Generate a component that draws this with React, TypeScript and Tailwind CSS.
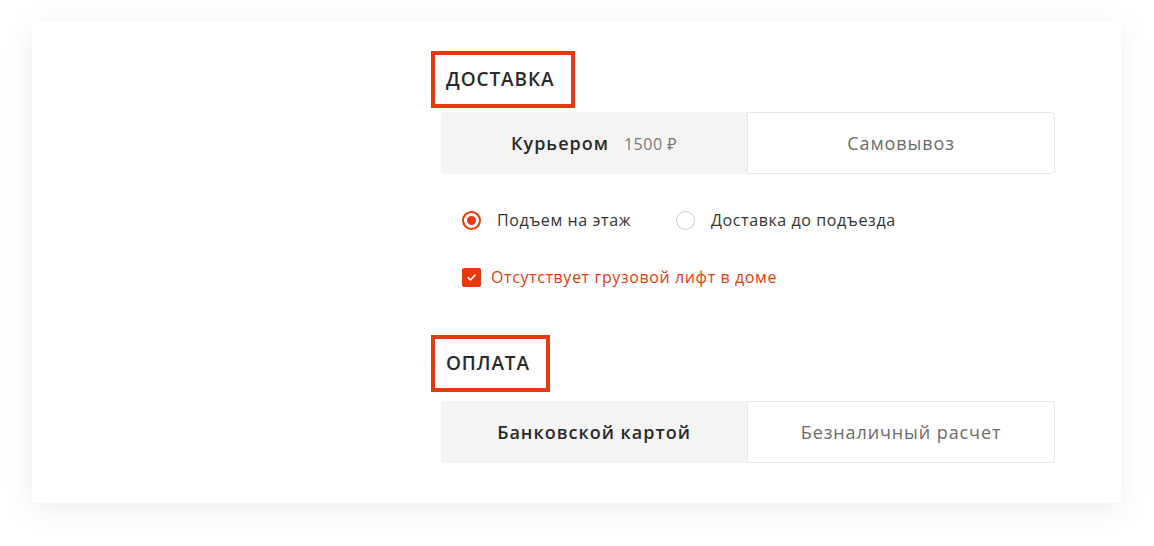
const RED = "#e8390e";

function Tabs({ left, right }: { left: React.ReactNode; right: string }) {
  return (
    <div className="ml-[10px] flex h-[62px] w-[614px]">
      <div className="flex flex-1 items-center justify-center rounded-l-[4px] bg-[#f4f4f4]">
        {left}
      </div>
      <div className="flex flex-1 items-center justify-center rounded-r-[4px] border border-[#e6e6e6] bg-white text-[18px] tracking-[0.9px] text-[#6b6b6b]">
        {right}
      </div>
    </div>
  );
}

function Heading({ children }: { children: string }) {
  return (
    <div className="inline-flex h-[57px] items-center self-start border-4 border-[#e8390e] pl-[11px] pr-[16px] text-[19px] font-semibold tracking-[0.9px] text-[#2a2a2a]">
      {children}
    </div>
  );
}

function Radio({ checked, label }: { checked?: boolean; label: string }) {
  return (
    <label className="flex items-center gap-[16px] text-[16px] leading-[20px] tracking-[0.6px] text-[#333]">
      {checked ? (
        <span className="flex h-[19px] w-[19px] items-center justify-center rounded-full border-2 border-[#e8390e]">
          <span className="h-[9px] w-[9px] rounded-full bg-[#e8390e]" />
        </span>
      ) : (
        <span className="h-[19px] w-[19px] rounded-full border border-[#c9c9c9]" />
      )}
      {label}
    </label>
  );
}

export default function App() {
  return (
    <div className="min-h-screen bg-white pl-[32px] pr-[33px] pt-[22px]" style={{ fontFamily: '"Open Sans", "Noto Sans", sans-serif' }}>
      <div className="flex flex-col pb-[40px] pl-[399px] pt-[29px] shadow-[0_6px_30px_rgba(0,0,0,0.08)]">
        <Heading>ДОСТАВКА</Heading>
        <div className="mt-[4px]">
          <Tabs
            left={
              <span className="flex items-baseline gap-[15px]">
                <span className="text-[18px] font-semibold tracking-[1px] text-[#2a2a2a]">Курьером</span>
                <span className="text-[16px] tracking-[0.5px] text-[#7a7a7a]">1500 ₽</span>
              </span>
            }
            right="Самовывоз"
          />
        </div>
        <div className="ml-[31px] mt-[36px] flex items-center gap-[45px]">
          <Radio checked label="Подъем на этаж" />
          <Radio label="Доставка до подъезда" />
        </div>
        <label className="ml-[31px] mt-[37px] flex items-center gap-[10px] text-[16px] leading-[20px] tracking-[0.6px]" style={{ color: RED }}>
          <span className="flex h-[19px] w-[19px] items-center justify-center rounded-[2px] bg-[#e8390e]">
            <svg width="9" height="7" viewBox="0 0 9 7" fill="none">
              <path d="M1 3.5 3.5 6 8 1" stroke="white" strokeWidth="1.5" strokeLinecap="round" strokeLinejoin="round" />
            </svg>
          </span>
          Отсутствует грузовой лифт в доме
        </label>
        <div className="mt-[48px] flex flex-col">
          <Heading>ОПЛАТА</Heading>
          <div className="mt-[9px]">
            <Tabs
              left={<span className="text-[18px] font-semibold tracking-[1px] text-[#2a2a2a]">Банковской картой</span>}
              right="Безналичный расчет"
            />
          </div>
        </div>
      </div>
    </div>
  );
}
